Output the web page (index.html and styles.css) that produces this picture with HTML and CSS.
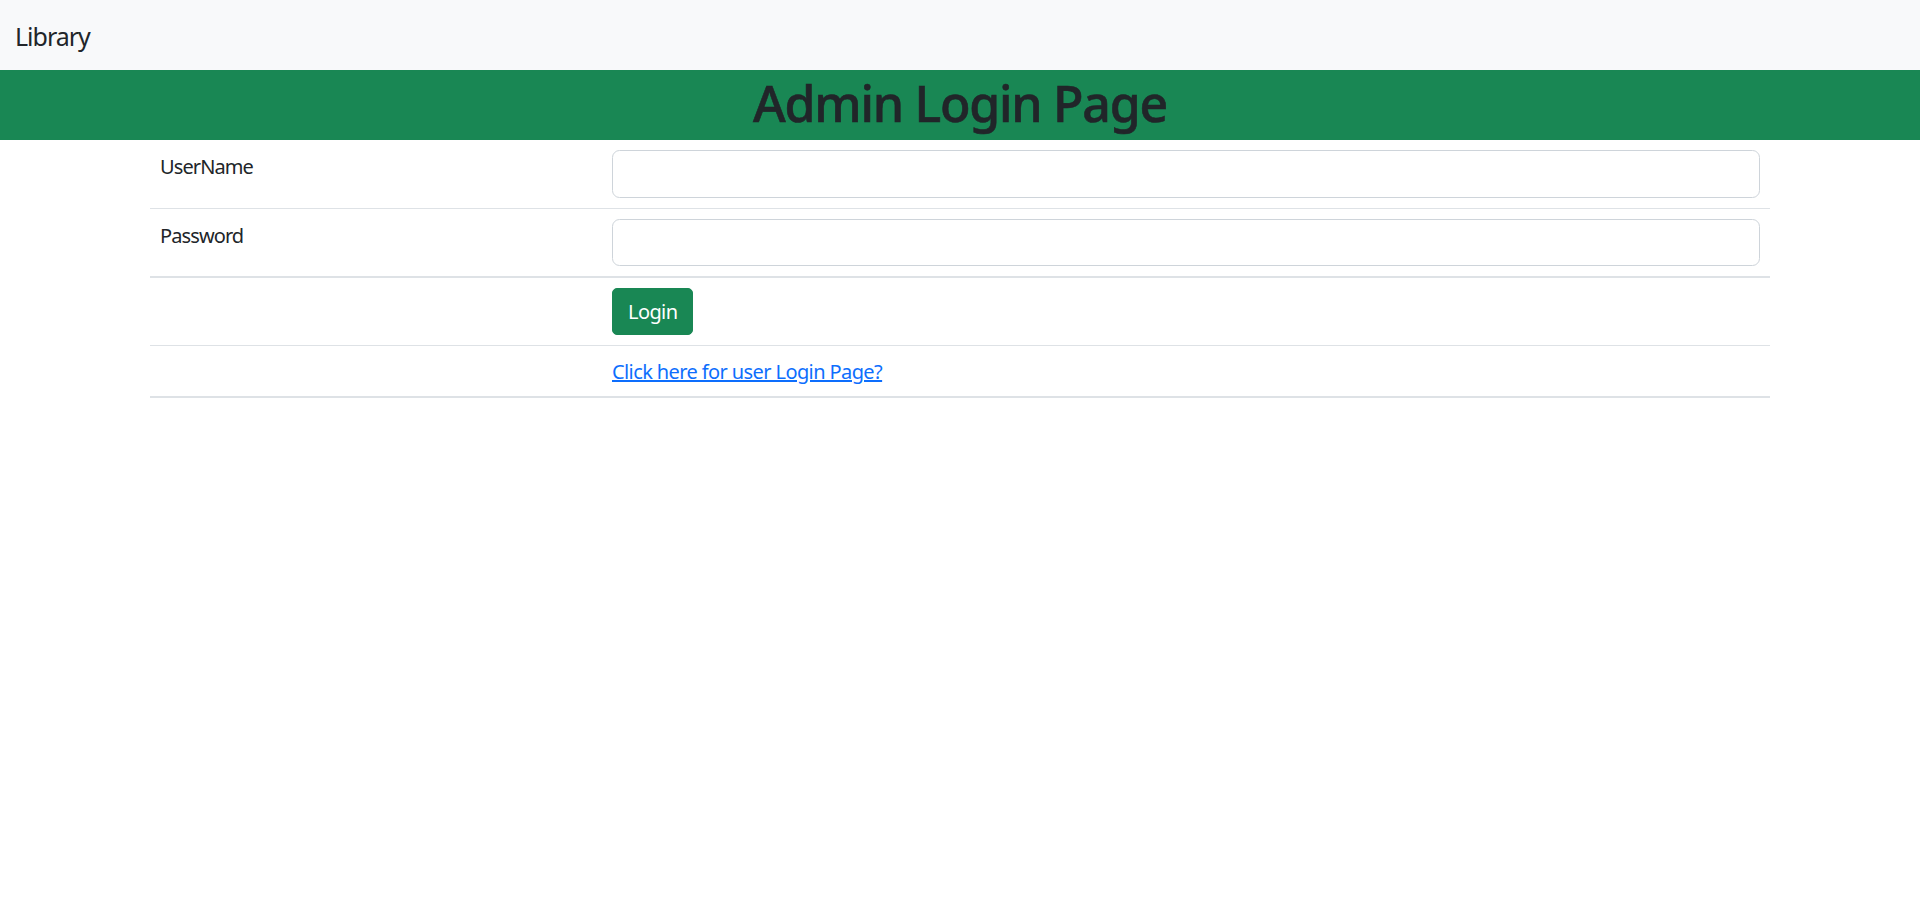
FILE: index.html
```html
<!DOCTYPE html>
<html lang="en">
<head>
<meta charset="utf-8">
<title>Admin Login Page</title>
<link rel="stylesheet" href="styles.css">
</head>
<body>
<nav class="navbar">
  <a class="brand" href="#">Library</a>
</nav>
<div class="banner">
  <h1 class="title">Admin Login Page</h1>
</div>
<div class="container">
  <table class="login-table">
    <tr class="row row-thin">
      <td class="label-cell">UserName</td>
      <td class="field-cell"><input class="field" type="text"></td>
    </tr>
    <tr class="row row-thick">
      <td class="label-cell">Password</td>
      <td class="field-cell"><input class="field" type="password"></td>
    </tr>
    <tr class="row row-thin">
      <td class="label-cell"></td>
      <td class="field-cell"><button class="btn-login" type="button">Login</button></td>
    </tr>
    <tr class="row row-thick">
      <td class="label-cell"></td>
      <td class="field-cell link-cell"><a class="link" href="#">Click here for user Login Page?</a></td>
    </tr>
  </table>
</div>
</body>
</html>
```
FILE: styles.css
```css
* { box-sizing: border-box; }
html, body {
  margin: 0;
  padding: 0;
  background: #fff;
}
body {
  font-family: "Noto Sans", "Open Sans", sans-serif;
  font-size: 20px;
  line-height: 1.5;
  color: #212529;
}
.navbar {
  background: #f8f9fa;
  height: 70px;
  padding: 12px 15px 8px;
  display: flex;
  align-items: center;
}
.brand {
  font-size: 25px;
  line-height: 37.5px;
  letter-spacing: -0.04em;
  padding: 6px 0;
  color: #212529;
  text-decoration: none;
}
.banner {
  background: #198754;
  height: 70px;
  text-align: center;
  padding-top: 3px;
}
.title {
  margin: 0;
  font-size: 50px;
  line-height: 60px;
  font-weight: 500;
  letter-spacing: -0.025em;
  color: #212529;
  -webkit-text-stroke: 0.6px #212529;
}
.container {
  max-width: 1650px;
  margin: 0 auto;
  padding: 0 15px;
}
.login-table {
  width: 100%;
  border-collapse: collapse;
}
.row.row-thin { border-bottom: 1px solid #dee2e6; }
.row.row-thick { border-bottom: 2px solid #dee2e6; }
.label-cell, .field-cell {
  padding: 10px;
  vertical-align: top;
}
.label-cell {
  width: 452px;
  padding-top: 12px;
  letter-spacing: -0.045em;
}
.field {
  display: block;
  width: 100%;
  height: 47.5px;
  border: 1px solid #ced4da;
  border-radius: 7.5px;
  padding: 7.5px 15px;
  font: inherit;
  background: #fff;
}
.btn-login {
  display: inline-block;
  height: 47px;
  padding: 7.5px 15px;
  background: #198754;
  color: #fff;
  border: 1px solid #198754;
  border-radius: 5px;
  font: inherit;
  line-height: 30px;
  letter-spacing: -0.03em;
}
.link-cell {
  padding-top: 11px;
  padding-bottom: 9px;
}
.link {
  color: #0d6efd;
  text-decoration: underline;
  line-height: 30px;
  letter-spacing: -0.03em;
}
```
